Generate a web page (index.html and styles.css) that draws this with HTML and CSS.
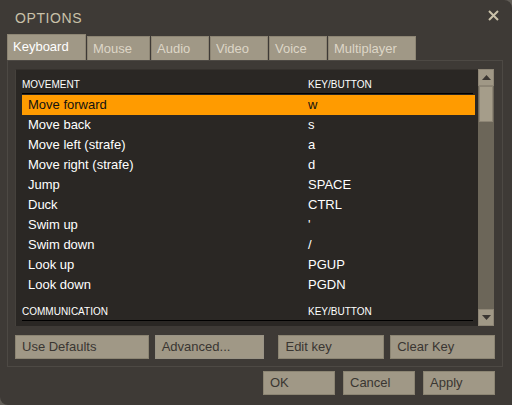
FILE: index.html
```html
<!DOCTYPE html>
<html>
<head>
<meta charset="utf-8">
<link rel="stylesheet" href="styles.css">
</head>
<body>
<div class="window">
  <div class="titlebar">
    <span class="title">OPTIONS</span>
    <svg class="close" width="11" height="11" viewBox="0 0 11 11"><path d="M1 1L10 10M10 1L1 10" stroke="#c9c1a9" stroke-width="2"/></svg>
  </div>
  <div class="tabs">
    <div class="tab active t-keyboard">Keyboard</div>
    <div class="tab t-mouse">Mouse</div>
    <div class="tab t-audio">Audio</div>
    <div class="tab t-video">Video</div>
    <div class="tab t-voice">Voice</div>
    <div class="tab t-multi">Multiplayer</div>
  </div>
  <div class="panel">
    <div class="listbox">
      <div class="list">
        <div class="hdr"><span class="c1">MOVEMENT</span><span class="c2">KEY/BUTTON</span></div>
        <div class="row sel"><span class="c1">Move forward</span><span class="c2">w</span></div>
        <div class="row"><span class="c1">Move back</span><span class="c2">s</span></div>
        <div class="row"><span class="c1">Move left (strafe)</span><span class="c2">a</span></div>
        <div class="row"><span class="c1">Move right (strafe)</span><span class="c2">d</span></div>
        <div class="row"><span class="c1">Jump</span><span class="c2">SPACE</span></div>
        <div class="row"><span class="c1">Duck</span><span class="c2">CTRL</span></div>
        <div class="row"><span class="c1">Swim up</span><span class="c2">'</span></div>
        <div class="row"><span class="c1">Swim down</span><span class="c2">/</span></div>
        <div class="row"><span class="c1">Look up</span><span class="c2">PGUP</span></div>
        <div class="row"><span class="c1">Look down</span><span class="c2">PGDN</span></div>
        <div class="hdr hdr2"><span class="c1">COMMUNICATION</span><span class="c2">KEY/BUTTON</span></div>
      </div>
      <div class="scrollbar">
        <div class="sbtn"><svg width="9" height="5" viewBox="0 0 9 5"><path d="M4.5 0L9 5H0Z" fill="#3a3632"/></svg></div>
        <div class="thumb"></div>
        <div class="track"></div>
        <div class="sbtn"><svg width="9" height="5" viewBox="0 0 9 5"><path d="M0 0H9L4.5 5Z" fill="#3a3632"/></svg></div>
      </div>
    </div>
    <div class="actions">
      <div class="btn b-defaults">Use Defaults</div>
      <div class="btn b-advanced">Advanced...</div>
      <div class="btn b-edit">Edit key</div>
      <div class="btn b-clear">Clear Key</div>
    </div>
  </div>
  <div class="footer">
    <div class="btn b-foot">OK</div>
    <div class="btn b-foot">Cancel</div>
    <div class="btn b-foot">Apply</div>
  </div>
</div>
</body>
</html>
```
FILE: styles.css
```css
html, body {
  margin: 0;
  padding: 0;
  background: #615d57;
}
.window {
  width: 512px;
  height: 405px;
  box-sizing: border-box;
  background: #3e3a36;
  border-radius: 0 8px 0 8px;
  font-family: "Liberation Sans", Arial, sans-serif;
  font-size: 13px;
  overflow: hidden;
}
.titlebar {
  height: 33px;
  display: flex;
  align-items: flex-start;
  justify-content: space-between;
  padding: 0 13px 0 15px;
}
.title {
  color: #c9c1a9;
  font-size: 14px;
  letter-spacing: 0.6px;
  margin-top: 10px;
  line-height: 16px;
}
.close {
  margin-top: 10px;
}
.tabs {
  display: flex;
  align-items: flex-end;
  height: 27px;
  padding-left: 7px;
  gap: 1px;
}
.tab {
  height: 24px;
  box-sizing: border-box;
  background: #a09886;
  color: #ddd6c6;
  border: 1px solid #8d8574;
  border-bottom: none;
  padding-left: 5px;
  line-height: 23px;
}
.tab.active {
  height: 26px;
  color: #ffffff;
  line-height: 24px;
}
.t-keyboard { width: 79px; }
.t-mouse { width: 63px; }
.t-audio { width: 58px; }
.t-video { width: 58px; }
.t-voice { width: 58px; }
.t-multi { width: 88px; }
.panel {
  margin: 0 9px 0 7px;
  height: 307px;
  box-sizing: border-box;
  border: 1px solid #4d4944;
  padding: 8px 7px 0 7px;
}
.listbox {
  display: flex;
  height: 257px;
  width: 479px;
}
.list {
  flex: 1;
  background: #2a2724;
  overflow: hidden;
  padding: 0 3px 0 6px;
  color: #ffffff;
  border-top: 1px solid #35312d;
  border-left: 1px solid #45413c;
}
.hdr {
  display: flex;
  height: 24px;
  box-sizing: border-box;
  padding-top: 9px;
  font-size: 10px;
  line-height: 12px;
  border-bottom: 1px solid #000;
  margin: 0 2px 1px 0;
}
.hdr2 {
  margin-top: 2px;
}
.hdr .c1 { width: 286px; }
.row {
  display: flex;
  height: 20px;
  line-height: 20px;
}
.row .c1 {
  width: 280px;
  padding-left: 6px;
}
.row.sel {
  background: #ff9b00;
  color: #111;
}
.scrollbar {
  width: 16px;
  display: flex;
  flex-direction: column;
  background: #6c6659;
}
.sbtn {
  height: 17px;
  box-sizing: border-box;
  background: #a09886;
  border: 1px solid #8e8676;
  display: flex;
  align-items: center;
  justify-content: center;
}
.thumb {
  height: 36px;
  box-sizing: border-box;
  background: #a59d8a;
  border: 1px solid #8d8575;
  margin: 0 1px;
}
.track {
  flex: 1;
}
.actions {
  display: flex;
  margin-top: 9px;
}
.btn {
  height: 24px;
  box-sizing: border-box;
  background: #a09886;
  border: 1px solid #8c8573;
  color: #3a3632;
  padding-left: 6px;
  line-height: 22px;
}
.b-defaults { width: 134px; }
.b-advanced { width: 110px; margin-left: 6px; border-color: #9a9486; }
.b-edit { width: 106px; margin-left: 14px; }
.b-clear { width: 105px; margin-left: 6px; }
.footer {
  display: flex;
  justify-content: flex-end;
  gap: 8px;
  padding-right: 17px;
  margin-top: 4px;
}
.b-foot { width: 72px; }
```
